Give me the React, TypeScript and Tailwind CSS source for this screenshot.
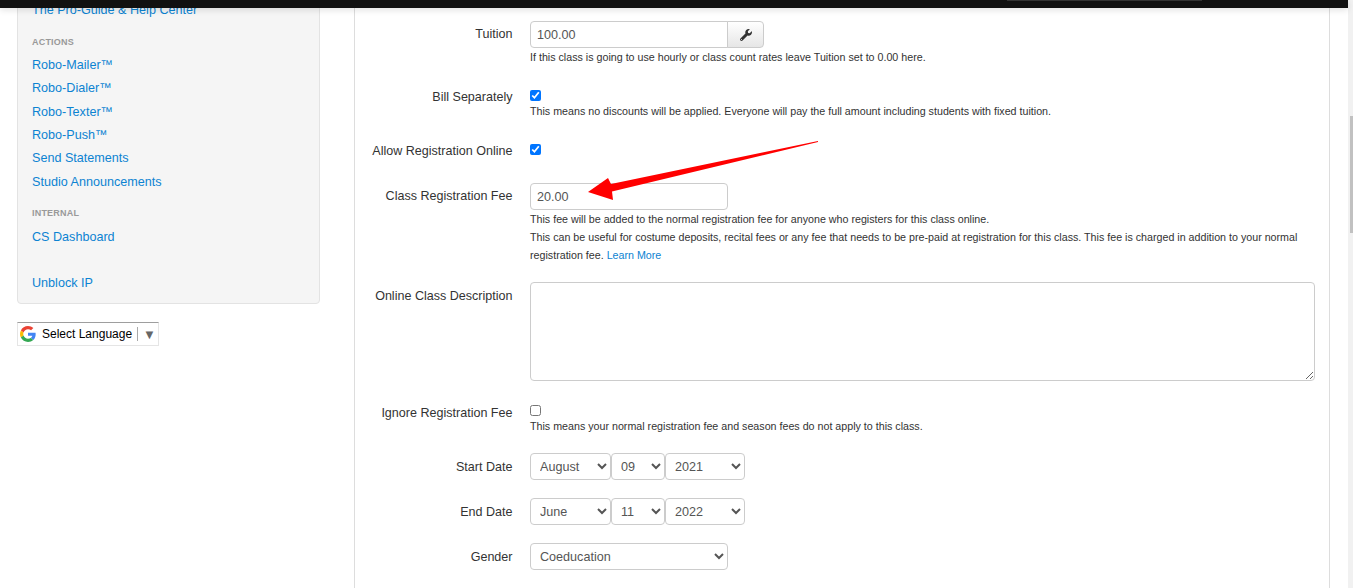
import React from "react";
import { FaWrench } from "react-icons/fa";

const link = "text-[#0c83d2] no-underline";

function SideLink({ children }: { children: React.ReactNode }) {
  return (
    <a className={`${link} block h-[23.4px] leading-[23.4px] text-[12.6px]`}>{children}</a>
  );
}

function Heading({ children, className = "" }: { children: React.ReactNode; className?: string }) {
  return (
    <div className={`text-[9px] font-bold leading-[12px] text-[#999999] tracking-[0.2px] ${className}`}>{children}</div>
  );
}

function Label({ children, className = "" }: { children: React.ReactNode; className?: string }) {
  return <div className={`w-[157.5px] shrink-0 text-right text-[12.55px] leading-[18px] text-[#333333] ${className}`}>{children}</div>;
}

function Help({ children, className = "" }: { children: React.ReactNode; className?: string }) {
  return <div className={`text-[10.7px] leading-[18px] text-[#333333] ${className}`}>{children}</div>;
}

function Row({ children, className = "" }: { children: React.ReactNode; className?: string }) {
  return <div className={`flex gap-[17.5px] ${className}`}>{children}</div>;
}

const selectCls =
  "h-[27px] rounded-[4px] border border-[#cccccc] bg-white pl-[5px] text-[12.6px] text-[#555555]";

function Sel({ value, width }: { value: string; width: string }) {
  return (
    <select defaultValue={value} className={`${selectCls} ${width}`}>
      <option>{value}</option>
    </select>
  );
}

function Check({ checked = false }: { checked?: boolean }) {
  return <input type="checkbox" defaultChecked={checked} className="block m-0 h-[11px] w-[11px]" />;
}

function GoogleG() {
  return (
    <svg viewBox="0 0 48 48" className="h-[16px] w-[16px] shrink-0">
      <path fill="#EA4335" d="M24 9.5c3.5 0 6.7 1.2 9.2 3.6l6.9-6.9C35.9 2.4 30.5 0 24 0 14.6 0 6.5 5.4 2.6 13.2l8 6.2C12.5 13.7 17.8 9.5 24 9.5z" />
      <path fill="#4285F4" d="M47 24.5c0-1.6-.1-3.1-.4-4.5H24v9h12.9c-.6 3-2.2 5.5-4.7 7.2l7.7 6C44.4 37.9 47 31.8 47 24.5z" />
      <path fill="#FBBC05" d="M10.5 28.6C10 27.2 9.8 25.6 9.8 24s.3-3.2.8-4.6l-8-6.2C.9 16.4 0 20.1 0 24s.9 7.6 2.6 10.8l7.9-6.2z" />
      <path fill="#34A853" d="M24 48c6.5 0 11.9-2.1 15.9-5.8l-7.7-6c-2.2 1.4-4.9 2.3-8.2 2.3-6.2 0-11.5-4.2-13.4-9.9l-8 6.2C6.5 42.6 14.6 48 24 48z" />
    </svg>
  );
}

export default function App() {
  return (
    <div className="relative flex h-[588px] w-[1353px] overflow-hidden bg-white font-['Liberation_Sans',Arial,sans-serif]">
      <div className="relative flex h-[588px] w-[1348px] shrink-0">
        {/* fixed top bar over the scrolled page */}
        <div className="absolute left-0 top-0 z-10 h-[8px] w-full bg-[#111111] shadow-[0_2px_6px_rgba(0,0,0,0.12)]">
          <div className="absolute left-[1007px] top-0 h-[1px] w-[195px] bg-[#333333]" />
        </div>

        {/* sidebar */}
        <aside className="ml-[17px] w-[303px] shrink-0">
          <div className="-mt-[2.5px] h-[306.5px] rounded-b-[4px] border border-[#e3e3e3] bg-[#f5f5f5] pl-[14px]">
            <SideLink>The Pro-Guide &amp; Help Center</SideLink>
            <Heading className="mt-[14px] mb-[6px]">ACTIONS</Heading>
            <SideLink>Robo-Mailer™</SideLink>
            <SideLink>Robo-Dialer™</SideLink>
            <SideLink>Robo-Texter™</SideLink>
            <SideLink>Robo-Push™</SideLink>
            <SideLink>Send Statements</SideLink>
            <SideLink>Studio Announcements</SideLink>
            <Heading className="mt-[13px] mb-[6.5px]">INTERNAL</Heading>
            <SideLink>CS Dashboard</SideLink>
            <div className="h-[22.5px]" />
            <SideLink>Unblock IP</SideLink>
          </div>
          <div className="mt-[18px] flex h-[24px] w-[142px] items-center border border-[#e5e5e5] border-t-[#9e9e9e] bg-white pl-[2px]">
            <GoogleG />
            <span className="ml-[6px] text-[12px] text-black">Select Language</span>
            <span className="ml-[5px] h-[14px] w-px bg-[#a9a9a9]" />
            <span className="ml-[5px] text-[13px] leading-none text-[#666666]">▼</span>
          </div>
        </aside>

        {/* main form */}
        <main className="ml-[34px] h-[588px] w-[976px] shrink-0 border-x border-[#dddddd]">
          <Row className="mt-[21px]">
            <Label className="mt-[4px]">Tuition</Label>
            <div>
              <div className="flex h-[27px]">
                <input readOnly value="100.00" className="h-[27px] w-[198px] rounded-l-[4px] border border-[#cccccc] px-[6px] text-[12.6px] text-[#555555]" />
                <button className="-ml-px flex h-[27px] w-[37px] items-center justify-center rounded-r-[4px] border border-[#cccccc] bg-linear-to-b from-white to-[#e6e6e6] text-[#333333]">
                  <FaWrench className="h-[12px] w-[12px]" />
                </button>
              </div>
              <Help>If this class is going to use hourly or class count rates leave Tuition set to 0.00 here.</Help>
            </div>
          </Row>

          <Row className="mt-[23px]">
            <Label className="mt-[-1px]">Bill Separately</Label>
            <div className="pt-[1px]">
              <Check checked />
              <Help className="mt-[1px]">This means no discounts will be applied. Everyone will pay the full amount including students with fixed tuition.</Help>
            </div>
          </Row>

          <Row className="mt-[23px]">
            <Label className="mt-[-1px]">Allow Registration Online</Label>
            <div className="pt-[1px]">
              <Check checked />
            </div>
          </Row>

          <Row className="mt-[23px]">
            <Label className="mt-[4px]">Class Registration Fee</Label>
            <div className="w-[785px]">
              <input readOnly value="20.00" className="block h-[27px] w-[198px] rounded-[4px] border border-[#cccccc] px-[6px] text-[12.6px] text-[#555555]" />
              <Help>
                This fee will be added to the normal registration fee for anyone who registers for this class online.
                <br />
                This can be useful for costume deposits, recital fees or any fee that needs to be pre-paid at registration for this class. This fee is charged in addition to your normal registration fee.{" "}
                <a className="text-[#0c83d2]">Learn More</a>
              </Help>
            </div>
          </Row>

          <Row className="mt-[18px]">
            <Label className="mt-[5px]">Online Class Description</Label>
            <textarea className="block h-[99px] w-[785px] rounded-[4px] border border-[#cccccc] bg-white" />
          </Row>

          <Row className="mt-[22px]">
            <Label className="mt-[1px]">Ignore Registration Fee</Label>
            <div className="pt-[2px]">
              <Check />
              <Help className="mt-[1px]">This means your normal registration fee and season fees do not apply to this class.</Help>
            </div>
          </Row>

          <Row className="mt-[18px]">
            <Label className="mt-[5px]">Start Date</Label>
            <div className="flex gap-[0.5px]">
              <Sel value="August" width="w-[80.5px]" />
              <Sel value="09" width="w-[53.5px]" />
              <Sel value="2021" width="w-[80px]" />
            </div>
          </Row>

          <Row className="mt-[18px]">
            <Label className="mt-[5px]">End Date</Label>
            <div className="flex gap-[0.5px]">
              <Sel value="June" width="w-[80.5px]" />
              <Sel value="11" width="w-[53.5px]" />
              <Sel value="2022" width="w-[80px]" />
            </div>
          </Row>

          <Row className="mt-[18px]">
            <Label className="mt-[5px]">Gender</Label>
            <Sel value="Coeducation" width="w-[198px]" />
          </Row>
        </main>

        {/* annotation arrow over the form */}
        <svg className="pointer-events-none absolute left-0 top-0 z-[5] h-[588px] w-[1348px] blur-[0.4px]" viewBox="0 0 1348 588">
          <polygon fill="#ff0000" points="818,141 611,184 608,178 588,192 613,200 612,191.5 818,142" />
        </svg>
      </div>

      {/* page scrollbar */}
      <div className="h-[588px] w-[5px] shrink-0 bg-[#f1f1f1] pt-[116px] pl-[2px]">
        <div className="h-[117px] w-[3px] bg-[#c1c1c1]" />
      </div>
    </div>
  );
}
